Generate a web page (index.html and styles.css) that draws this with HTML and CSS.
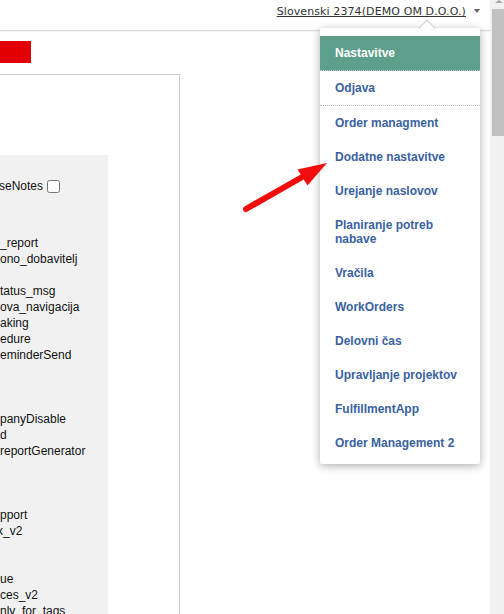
FILE: index.html
```html
<!DOCTYPE html>
<html lang="sl">
<head>
<meta charset="utf-8">
<title>Nastavitve</title>
<link rel="stylesheet" href="styles.css">
</head>
<body>
<div class="page">
  <div class="main">
    <header class="topbar">
      <a class="user" href="#">Slovenski 2374(DEMO OM D.O.O.)</a>
      <span class="dd-caret"></span>
    </header>

    <div class="content">
      <div class="alert"></div>
      <div class="box">
        <div class="panel">
          <div class="check-row"><span class="lbl">seNotes</span><input type="checkbox" class="cb"></div>
          <div class="line">_report</div>
          <div class="line">ono_dobavitelj</div>
          <div class="line"></div>
          <div class="line">tatus_msg</div>
          <div class="line">ova_navigacija</div>
          <div class="line">aking</div>
          <div class="line">edure</div>
          <div class="line">eminderSend</div>
          <div class="line"></div>
          <div class="line"></div>
          <div class="line"></div>
          <div class="line">panyDisable</div>
          <div class="line">d</div>
          <div class="line">reportGenerator</div>
          <div class="line"></div>
          <div class="line"></div>
          <div class="line"></div>
          <div class="line">pport</div>
          <div class="line cut">x_v2</div>
          <div class="line"></div>
          <div class="line"></div>
          <div class="line">ue</div>
          <div class="line">ces_v2</div>
          <div class="line">nly_for_tags</div>
        </div>
      </div>
    </div>

    <nav class="menu">
      <div class="menu-item head">Nastavitve</div>
      <div class="menu-item sep">Odjava</div>
      <div class="menu-item">Order managment</div>
      <div class="menu-item">Dodatne nastavitve</div>
      <div class="menu-item">Urejanje naslovov</div>
      <div class="menu-item">Planiranje potreb nabave</div>
      <div class="menu-item">Vračila</div>
      <div class="menu-item">WorkOrders</div>
      <div class="menu-item">Delovni čas</div>
      <div class="menu-item">Upravljanje projektov</div>
      <div class="menu-item">FulfillmentApp</div>
      <div class="menu-item">Order Management 2</div>
    </nav>

    <svg class="arrow" width="504" height="614" viewBox="0 0 504 614" aria-hidden="true">
      <line x1="246" y1="209" x2="304" y2="176" stroke="#f40c0c" stroke-width="6" stroke-linecap="round"/>
      <polygon points="327,163 297.5,169.5 307.5,185.5" fill="#f40c0c"/>
    </svg>
  </div>
  <div class="scrollbar">
    <div class="sb-up"></div>
    <div class="sb-thumb"></div>
  </div>
</div>
</body>
</html>
```

FILE: styles.css
```css
html, body {
  margin: 0;
  padding: 0;
  background: #fff;
}

.page {
  display: flex;
  width: 504px;
  height: 614px;
  overflow: hidden;
  font-family: "Liberation Sans", Arial, sans-serif;
}

.main {
  position: relative;
  flex: 1;
  min-width: 0;
  overflow: hidden;
}

.topbar {
  height: 30px;
  border-bottom: 1px solid #dcdcdc;
  box-shadow: 0 1px 1px rgba(0,0,0,0.04);
  display: flex;
  justify-content: flex-end;
  align-items: flex-start;
  padding: 5px 10px 0 0;
  box-sizing: border-box;
  height: 31px;
}

.user {
  font-family: "DejaVu Sans", Verdana, sans-serif;
  font-size: 11px;
  letter-spacing: 0.1px;
  line-height: 13px;
  color: #333;
  text-decoration: underline;
}

.dd-caret {
  width: 0;
  height: 0;
  margin: 4px 0 0 8px;
  border-left: 3.5px solid transparent;
  border-right: 3.5px solid transparent;
  border-top: 4px solid #666;
}

.content {
  display: flex;
  flex-direction: column;
}

.alert {
  width: 31px;
  height: 22px;
  margin-top: 10px;
  background: #e30000;
}

.box {
  margin: 11px 0 0 -40px;
  width: 220px;
  box-sizing: border-box;
  border: 1px solid #cccccc;
  padding-top: 80px;
  height: 620px;
}

.panel {
  width: 147px;
  box-sizing: border-box;
  background: #f1f1f1;
  padding: 21px 0 0 39px;
  height: 560px;
  font-size: 12px;
  color: #111;
}

.check-row {
  display: flex;
  align-items: center;
  height: 20px;
  margin-bottom: 39px;
  margin-left: -1px;
}

.cb {
  width: 13px;
  height: 13px;
  margin: 0 0 0 4px;
}

.line {
  height: 16px;
  line-height: 16px;
  white-space: nowrap;
}

.cut {
  margin-left: -3px;
}

.menu {
  position: absolute;
  left: 320px;
  top: 28px;
  width: 160px;
  background: #fff;
  border-radius: 2px;
  padding: 8px 0 4px;
  box-shadow: 0 2px 8px rgba(0,0,0,0.32);
  font-family: "Liberation Sans", Arial, sans-serif;
}

.menu::before {
  content: "";
  position: absolute;
  left: 101px;
  top: -6px;
  width: 11px;
  height: 11px;
  background: #fff;
  border-top: 1px solid #cfcfcf;
  border-left: 1px solid #cfcfcf;
  transform: rotate(45deg);
}

.menu-item {
  font-size: 12px;
  font-weight: bold;
  line-height: 14px;
  padding: 10px 15px;
  color: #3a62a0;
}

.menu-item.head {
  position: relative;
  background: #5e9f8c;
  color: #fff;
  border-bottom: 1px dotted #c8c8c8;
  padding-bottom: 10px;
  height: 14px;
}

.menu-item.sep {
  border-bottom: 1px dotted #bdbdbd;
}

.arrow {
  position: absolute;
  left: 0;
  top: 0;
  pointer-events: none;
}

.scrollbar {
  width: 14px;
  flex: none;
  background: #f1f1f1;
  position: relative;
}

.sb-up {
  position: absolute;
  left: 5px;
  top: 0;
  width: 0;
  height: 0;
  border-left: 4px solid transparent;
  border-right: 4px solid transparent;
  border-bottom: 3px solid #a3a3a3;
}

.sb-thumb {
  margin: 9px 0 0 2px;
  height: 127px;
  background: #c1c1c1;
}
```
